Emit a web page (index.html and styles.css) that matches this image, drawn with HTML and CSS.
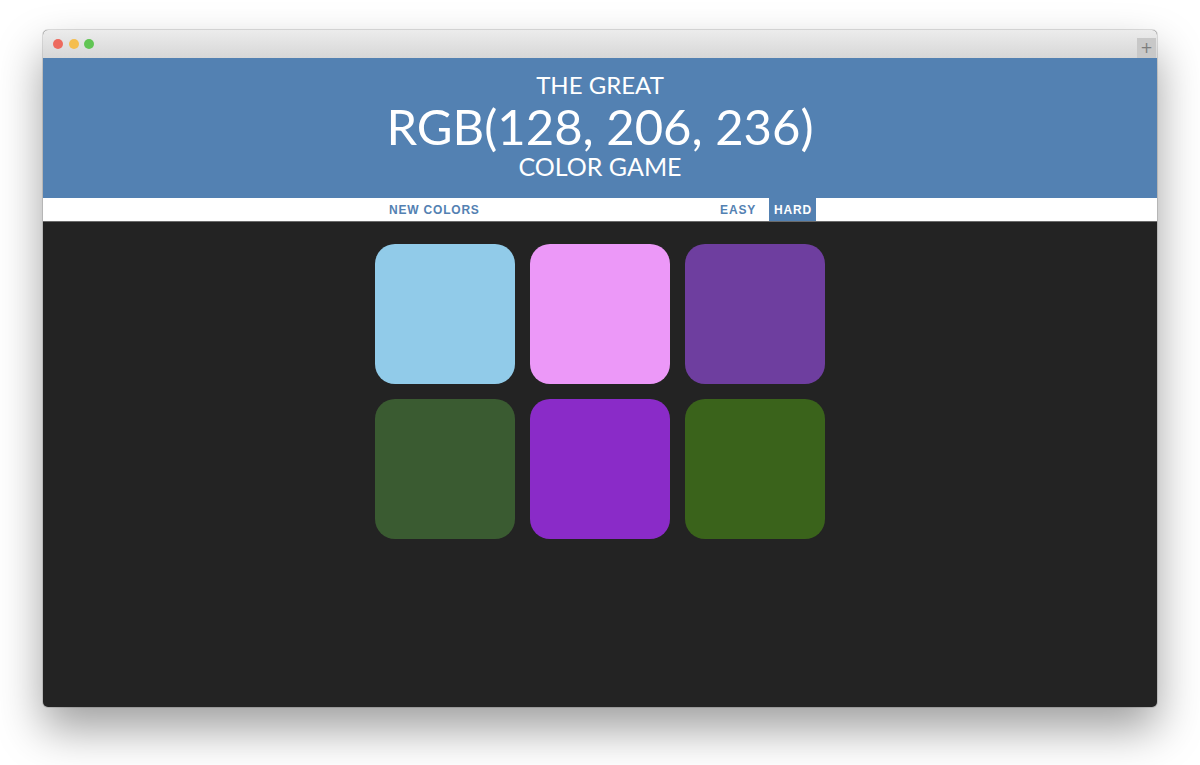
FILE: index.html
```html
<!DOCTYPE html>
<html>
<head>
<meta charset="utf-8">
<title>Color Game</title>
<link rel="stylesheet" href="styles.css">
</head>
<body>
<div class="window">
  <div class="titlebar">
    <div class="lights">
      <span class="light red"></span>
      <span class="light yellow"></span>
      <span class="light green"></span>
    </div>
    <div class="plus">+</div>
  </div>
  <header class="header">
    <span class="line small">THE GREAT</span>
    <span class="line big">RGB(128, 206, 236)</span>
    <span class="line small last">COLOR GAME</span>
  </header>
  <nav class="nav">
    <div class="nav-inner">
      <button class="btn">NEW COLORS</button>
      <span class="message"></span>
      <button class="btn easy">EASY</button>
      <button class="btn selected">HARD</button>
    </div>
  </nav>
  <main class="board">
    <div class="grid">
      <div class="square" style="background:#91cbe9"></div>
      <div class="square" style="background:#ec98f8"></div>
      <div class="square" style="background:#6e3e9f"></div>
      <div class="square" style="background:#3a5b31"></div>
      <div class="square" style="background:#8a2bc8"></div>
      <div class="square" style="background:#3a631b"></div>
    </div>
  </main>
</div>
</body>
</html>
```
FILE: styles.css
```css
* { box-sizing: border-box; }
html, body { margin: 0; padding: 0; background: #ffffff; }
body {
  width: 1200px;
  height: 765px;
  overflow: hidden;
  padding: 30px 0 0 43px;
  font-family: Lato, "Open Sans", sans-serif;
}
.window {
  width: 1114px;
  height: 677px;
  background: #232323;
  border-radius: 5px;
  overflow: hidden;
  display: flex;
  flex-direction: column;
  box-shadow: 0 22px 45px rgba(0, 0, 0, 0.38), 0 0 0 1px rgba(0,0,0,0.12);
}
.titlebar {
  height: 28px;
  flex: none;
  background: linear-gradient(#ececec, #d7d7d7);
  display: flex;
  justify-content: space-between;
  align-items: flex-start;
}
.lights {
  display: flex;
  gap: 5.5px;
  padding: 9px 0 0 10px;
}
.light {
  width: 10px;
  height: 10px;
  border-radius: 50%;
  display: block;
}
.red { background: #ed6a5e; }
.yellow { background: #f5be4f; }
.green { background: #61c554; }
.plus {
  width: 19px;
  height: 20px;
  margin: 8px 1px 0 0;
  background: #c8c8c8;
  color: #7d7d7d;
  font-family: "DejaVu Sans", sans-serif;
  font-size: 15px;
  line-height: 20px;
  text-align: center;
}
.header {
  height: 140px;
  flex: none;
  background: #5381b2;
  color: #ffffff;
  text-align: center;
  padding-top: 12px;
  font-weight: 400;
}
.line { display: block; }
.small { font-size: 24px; line-height: 30px; }
.big { font-size: 49px; line-height: 52px; }
.last { line-height: 28px; font-size: 25px; }
.nav {
  height: 24px;
  flex: none;
  background: #ffffff;
  border-bottom: 1px solid #6a6a6a;
}
.nav-inner {
  width: 450px;
  height: 23px;
  margin: 0 auto;
  display: flex;
  align-items: stretch;
  padding: 0 9px 0 14px;
}
.btn {
  border: none;
  background: none;
  padding: 0;
  font-family: "Liberation Sans", Arial, sans-serif;
  font-weight: 700;
  font-size: 12px;
  letter-spacing: 0.8px;
  color: #5381b2;
  text-transform: uppercase;
  cursor: pointer;
}
.message { flex: 1; }
.easy { padding: 0 4px; margin-right: 9px; }
.selected {
  background: #5381b2;
  color: #ffffff;
  padding: 0 4px 0 5px;
  width: 47px;
}
.board {
  flex: 1;
  padding-top: 22px;
}
.grid {
  width: 450px;
  margin: 0 auto;
  display: grid;
  grid-template-columns: repeat(3, 140px);
  grid-auto-rows: 140px;
  gap: 15px;
}
.square { border-radius: 20px; }
```
